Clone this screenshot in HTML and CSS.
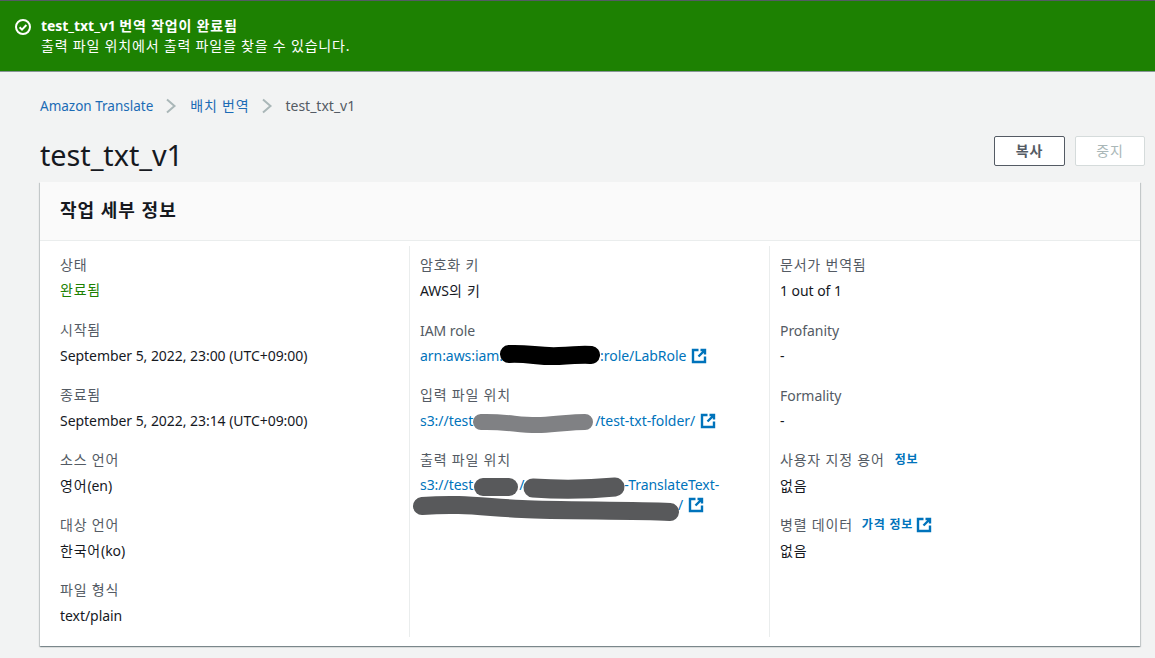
FILE: index.html
```html
<!DOCTYPE html>
<html lang="ko">
<head>
<meta charset="utf-8">
<title>test_txt_v1</title>
<link rel="stylesheet" href="styles.css">
</head>
<body>
<svg width="0" height="0" class="defs" aria-hidden="true">
  <symbol id="ext" viewBox="0 0 16 16">
    <path d="M7.5 2H2v12h12V8.5M9.500 2H14v4.500M14 2L7.500 8.500" fill="none" stroke="currentColor" stroke-width="2.4"/>
  </symbol>
</svg>
<div class="flash">
  <svg class="flash-icon" viewBox="0 0 16 16"><circle cx="8" cy="8" r="7" fill="none" stroke="#fff" stroke-width="2"/><path d="M4.600 8.200l2.400 2.400 4.400-4.600" fill="none" stroke="#fff" stroke-width="2"/></svg>
  <div class="flash-text">
    <div class="flash-title">test_txt_v1 <span class="ko">번역 작업이 완료됨</span></div>
    <div class="ko">출력 파일 위치에서 출력 파일을 찾을 수 있습니다.</div>
  </div>
</div>
<main class="main">
  <nav class="crumbs">
    <a href="#">Amazon Translate</a>
    <svg class="chev" viewBox="0 0 12 16"><path d="M2 1.500l7.500 6.500L2 14.500" fill="none" stroke="#aab7b8" stroke-width="2"/></svg>
    <a href="#" class="ko crumb-ko">배치 번역</a>
    <svg class="chev" viewBox="0 0 12 16"><path d="M2 1.500l7.500 6.500L2 14.500" fill="none" stroke="#aab7b8" stroke-width="2"/></svg>
    <span class="crumb-current">test_txt_v1</span>
  </nav>
  <div class="head">
    <h1>test_txt_v1</h1>
    <div class="actions">
      <button class="btn ko">복사</button>
      <button class="btn btn-off ko">중지</button>
    </div>
  </div>
  <section class="card">
    <h2 class="card-head ko">작업 세부 정보</h2>
    <div class="cols">
      <div class="col">
        <div class="item"><div class="label ko">상태</div><div class="value ok ko">완료됨</div></div>
        <div class="item"><div class="label ko">시작됨</div><div class="value">September 5, 2022, 23:00 (UTC+09:00)</div></div>
        <div class="item"><div class="label ko">종료됨</div><div class="value">September 5, 2022, 23:14 (UTC+09:00)</div></div>
        <div class="item"><div class="label ko">소스 언어</div><div class="value"><span class="ko">영어</span>(en)</div></div>
        <div class="item"><div class="label ko">대상 언어</div><div class="value"><span class="ko">한국어</span>(ko)</div></div>
        <div class="item"><div class="label ko">파일 형식</div><div class="value">text/plain</div></div>
      </div>
      <div class="col">
        <div class="item"><div class="label ko">암호화 키</div><div class="value">AWS<span class="ko">의 키</span></div></div>
        <div class="item"><div class="label">IAM role</div><div class="value"><a href="#">arn:aws:iam:<span class="gap gap-arn"></span>:role/LabRole<svg class="ext"><use href="#ext"/></svg></a></div></div>
        <div class="item"><div class="label ko">입력 파일 위치</div><div class="value"><a href="#">s3://test<span class="gap gap-in"></span>/test-txt-folder/<svg class="ext"><use href="#ext"/></svg></a></div></div>
        <div class="item"><div class="label ko">출력 파일 위치</div><div class="value tight"><a href="#">s3://test<span class="gap gap-out1"></span>/<span class="gap gap-out2"></span>-TranslateText-<br><span class="gap gap-out3"></span>/<svg class="ext"><use href="#ext"/></svg></a></div></div>
      </div>
      <div class="col">
        <div class="item"><div class="label ko">문서가 번역됨</div><div class="value">1 out of 1</div></div>
        <div class="item"><div class="label">Profanity</div><div class="value">-</div></div>
        <div class="item"><div class="label">Formality</div><div class="value">-</div></div>
        <div class="item"><div class="label ko">사용자 지정 용어<a href="#" class="info">정보</a></div><div class="value ko">없음</div></div>
        <div class="item"><div class="label ko">병렬 데이터<a href="#" class="info info-near">가격 정보<svg class="ext ext-near"><use href="#ext"/></svg></a></div><div class="value ko">없음</div></div>
      </div>
    </div>
  </section>
</main>
<svg class="scribbles" width="1155" height="658" aria-hidden="true">
  <path d="M509 354c20-1 30 3 50 2s25-2 32-1" stroke="#000" stroke-width="18"/>
  <path d="M481 422c25-1 40 4 60 3s30-3 44-3" stroke="#808184" stroke-width="16"/>
  <path d="M483 487h26" stroke="#58595b" stroke-width="18"/>
  <path d="M533 488c30 2 50 2 82-1" stroke="#58595b" stroke-width="19"/>
  <path d="M422 506c40-3 60 1 100 3s110 1 148 3" stroke="#58595b" stroke-width="18"/>
</svg>
</body>
</html>
```
FILE: styles.css
```css
* { box-sizing: border-box; }
html, body { margin: 0; height: 658px; overflow: hidden; }
body {
  background: #f2f3f3;
  color: #16191f;
  font-family: "Noto Sans", "Noto Sans CJK KR", sans-serif;
  font-size: 14px;
  line-height: 22px;
  letter-spacing: -.05px;
  position: relative;
}
a { color: #0073bb; text-decoration: none; }
.ko { letter-spacing: .8px; }
.defs { position: absolute; }
.flash {
  height: 72px;
  background: #1d8102;
  border-top: 1px solid #545b64;
  border-bottom: 1px solid #879596;
  color: #fff;
  display: flex;
  padding: 15px 15px 0;
  gap: 10px;
  line-height: 20px;
}
.flash-icon { width: 16px; height: 16px; margin-top: 3px; flex: none; }
.flash-title { font-weight: 700; }
.main { padding: 23px 10px 0 40px; }
.crumbs { display: flex; align-items: center; height: 22px; margin-bottom: 24px; font-size: 13.500px; letter-spacing: 0; }
.crumbs a { color: #1b6bb5; }
.crumbs .crumb-ko { font-size: 14px; margin-left: -1px; letter-spacing: .8px; }
.chev { width: 12px; height: 16px; margin: 0 14px 0 12px; }
.crumb-current { color: #545b64; font-size: 14px; margin-left: -2px; }
.head { display: flex; justify-content: space-between; height: 41px; }
h1 { margin: 0; font-size: 28.800px; font-weight: 400; line-height: 28px; }
.actions { display: flex; gap: 10px; align-items: flex-start; margin-top: -5px; }
.btn {
  width: 71px;
  height: 30px;
  background: #fff;
  border: 1px solid #545b64;
  border-radius: 2px;
  color: #545b64;
  font: 700 14px/20px "Noto Sans", "Noto Sans CJK KR", sans-serif;
  letter-spacing: .8px;
  padding: 0;
}
.btn-off { width: 70px; border-color: #d5dbdb; color: #aab7b8; font-weight: 400; }
.card {
  width: 1100px;
  height: 464px;
  background: #fff;
  box-shadow: 0 1px 1px 0 rgba(0,28,36,.3), 1px 1px 1px 0 rgba(0,28,36,.15), -1px 1px 1px 0 rgba(0,28,36,.15);
}
.card-head {
  margin: 0;
  height: 59px;
  padding: 16px 20px 0;
  background: #fafafa;
  border-bottom: 1px solid #eaeded;
  font-size: 18px;
  font-weight: 700;
  line-height: 24px;
  letter-spacing: 1px;
}
.cols { display: grid; grid-template-columns: 369px 360px 1fr; padding-top: 5px; }
.col { height: 391px; padding: 9px 20px 0 10px; border-left: 1px solid #eaeded; display: flex; flex-direction: column; gap: 18px; }
.col:first-child { border-left: 0; padding-left: 20px; }
.label { color: #545b64; height: 22px; display: flex; align-items: center; }
.label.ko { padding-bottom: 2px; }
.value { height: 22px; margin-top: 3px; white-space: nowrap; }
.value.tight { line-height: 20px; }
.value.ok { color: #1d8102; line-height: 20px; }
.gap { display: inline-block; height: 1px; }
.gap-arn { width: 97px; }
.gap-in { width: 122px; }
.gap-out1 { width: 46px; }
.gap-out2 { width: 100px; }
.gap-out3 { width: 258px; }
.ext { width: 16px; height: 16px; margin-left: 5px; vertical-align: -3px; color: #0073bb; }
.ext-near { margin-left: 3px; }
.info { font-size: 12px; font-weight: 700; margin-left: 10px; display: inline-flex; align-items: center; }
.info-near { margin-left: 9px; }
.scribbles { position: absolute; top: 0; left: 0; fill: none; stroke-linecap: round; stroke-linejoin: round; pointer-events: none; }
```
